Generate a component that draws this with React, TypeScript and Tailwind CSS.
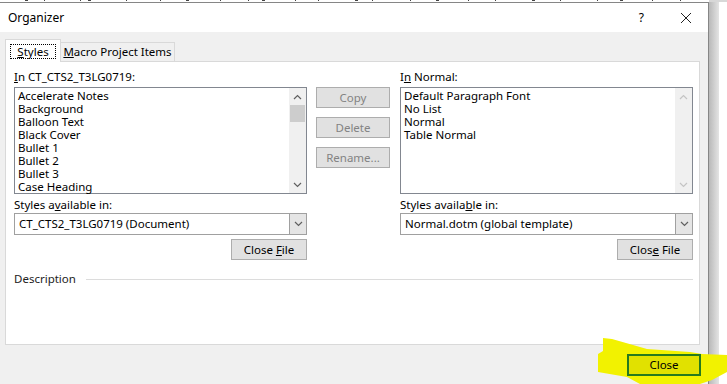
import React from "react";

const Up = ({ c }: { c: string }) => (
  <svg width="9" height="6" viewBox="0 0 9 6"><polyline points="1,5 4.5,1.5 8,5" fill="none" stroke={c} strokeWidth="1.2" /></svg>
);
const Down = ({ c }: { c: string }) => (
  <svg width="9" height="6" viewBox="0 0 9 6"><polyline points="1,1 4.5,4.5 8,1" fill="none" stroke={c} strokeWidth="1.2" /></svg>
);

const ListBox = ({ items, enabled }: { items: string[]; enabled: boolean }) => (
  <div className="h-[107px] border border-[#828790] bg-white flex">
    <div className="flex-1 pl-[3px] pt-[1px]">
      {items.map((t) => (
        <div key={t} className="h-[13px] leading-[13px] whitespace-nowrap">{t}</div>
      ))}
    </div>
    <div className="w-[17px] bg-[#f0f0f0] flex flex-col">
      <div className="h-[17px] flex items-center justify-center"><Up c={enabled ? "#606060" : "#c4c4c4"} /></div>
      {enabled ? <div className="h-[17px] bg-[#cdcdcd] mx-[1px]" /> : null}
      <div className="flex-1" />
      <div className="h-[17px] flex items-center justify-center"><Down c={enabled ? "#606060" : "#c4c4c4"} /></div>
    </div>
  </div>
);

const Combo = ({ text }: { text: string }) => (
  <div className="h-[22px] border border-[#a0a0a0] bg-white flex">
    <div className="flex-1 pl-[4px] leading-[20px] whitespace-nowrap">{text}</div>
    <div className="w-[17px] bg-[#e5e5e5] border-l border-[#a0a0a0] flex items-center justify-center"><Down c="#606060" /></div>
  </div>
);

const Btn = ({ children, disabled, w }: { children: React.ReactNode; disabled?: boolean; w: string }) => (
  <div className={`${w} h-[21px] bg-[#e1e1e1] border border-[#adadad] flex items-center justify-center leading-[19px] ${disabled ? "text-[#838383]" : "text-black"}`}>
    <span className="whitespace-pre">{children}</span>
  </div>
);

export default function App() {
  const marks = [25, 44, 80, 88, 126, 160, 186, 220, 248, 262, 295, 318, 355, 372, 410, 436, 468, 495, 532, 560, 597, 620, 652, 680];
  return (
    <div className="w-[727px] h-[384px] bg-white relative overflow-hidden text-[11.5px] text-black font-['Noto_Sans',sans-serif]">
      <svg width="727" height="2" className="block">
        {marks.map((x, i) => (
          <rect key={i} x={x} y={0} width={i % 3 === 0 ? 3 : 1} height={1} fill="#444" />
        ))}
        <rect x="709" y="0" width="18" height="2" fill="#d8d8d8" />
      </svg>
      <div className="flex h-[382px]">
        <div className="w-[709px] border-t border-r border-[#868686] bg-[#f0f0f0] flex flex-col">
          <div className="h-[29px] bg-white flex items-center pl-[8px] pr-[16px]">
            <span className="text-[12px]">Organizer</span>
            <span className="ml-auto mr-[36px] text-[12px]">?</span>
            <svg width="12" height="12" viewBox="0 0 12 12"><path d="M1 1 L11 11 M11 1 L1 11" stroke="#222" strokeWidth="1" /></svg>
          </div>
          <div className="pt-[7px] pl-[5px]">
            <div className="flex items-end h-[22px]">
              <div className="w-[56px] h-[23px] bg-white border border-b-0 border-[#d9d9d9] flex items-center justify-center relative z-10 -mb-px">
                <span className="border border-dotted border-black px-[6px] leading-[13px]"><u>S</u>tyles</span>
              </div>
              <div className="w-[114px] h-[19px] bg-[#f0f0f0] border-t border-r border-[#d9d9d9] flex items-center justify-center">
                <span><u>M</u>acro Project Items</span>
              </div>
            </div>
            <div className="w-[695px] h-[284px] bg-white border border-[#d9d9d9] pl-[8px] pt-[7px] pr-[6px]">
              <div className="flex">
                <div className="w-[293px] flex flex-col">
                  <div className="h-[18px] leading-[16px]"><u>I</u>n CT_CTS2_T3LG0719:</div>
                  <ListBox enabled items={["Accelerate Notes", "Background", "Balloon Text", "Black Cover", "Bullet 1", "Bullet 2", "Bullet 3", "Case Heading"]} />
                  <div className="h-[19px] pt-[3px] leading-[16px]">Styles a<u>v</u>ailable in:</div>
                  <Combo text="CT_CTS2_T3LG0719 (Document)" />
                  <div className="mt-[4px] self-end"><Btn w="w-[76px]">Close <u>F</u>ile</Btn></div>
                </div>
                <div className="ml-[9px] w-[74px] pt-[18px] flex flex-col gap-[9px]">
                  <Btn w="w-[74px]" disabled>Copy</Btn>
                  <Btn w="w-[74px]" disabled>Delete</Btn>
                  <Btn w="w-[74px]" disabled>Rename...</Btn>
                </div>
                <div className="ml-[10px] w-[293px] flex flex-col">
                  <div className="h-[18px] leading-[16px]">I<u>n</u> Normal:</div>
                  <ListBox enabled={false} items={["Default Paragraph Font", "No List", "Normal", "Table Normal"]} />
                  <div className="h-[19px] pt-[3px] leading-[16px]">Styles availa<u>b</u>le in:</div>
                  <Combo text="Normal.dotm (global template)" />
                  <div className="mt-[4px] self-end"><Btn w="w-[76px]">Clos<u>e</u> File</Btn></div>
                </div>
              </div>
              <div className="mt-[11px] h-[16px] flex items-center gap-[10px]">
                <span className="text-[#222]">Description</span>
                <div className="flex-1 h-px bg-[#dcdcdc]" />
              </div>
            </div>
          </div>
        </div>
        <div className="w-[10px] bg-gradient-to-r from-[#b9b9b9] to-[#e4e4e4]" />
      </div>
      <svg width="727" height="384" className="absolute left-0 top-0 pointer-events-none">
        <polygon
          points="603,338 612,339 647,349 690,352 702,354 727,355 727,372 712,380 700,384 640,384 627,377 598,372 598,354 603,351"
          fill="#f2f200"
        />
      </svg>
      <div className="absolute left-[627px] top-[354px] w-[74px] h-[22px] bg-[#e1e100] border-2 border-[#267a1e] flex items-center justify-center leading-[18px]">Close</div>
    </div>
  );
}
